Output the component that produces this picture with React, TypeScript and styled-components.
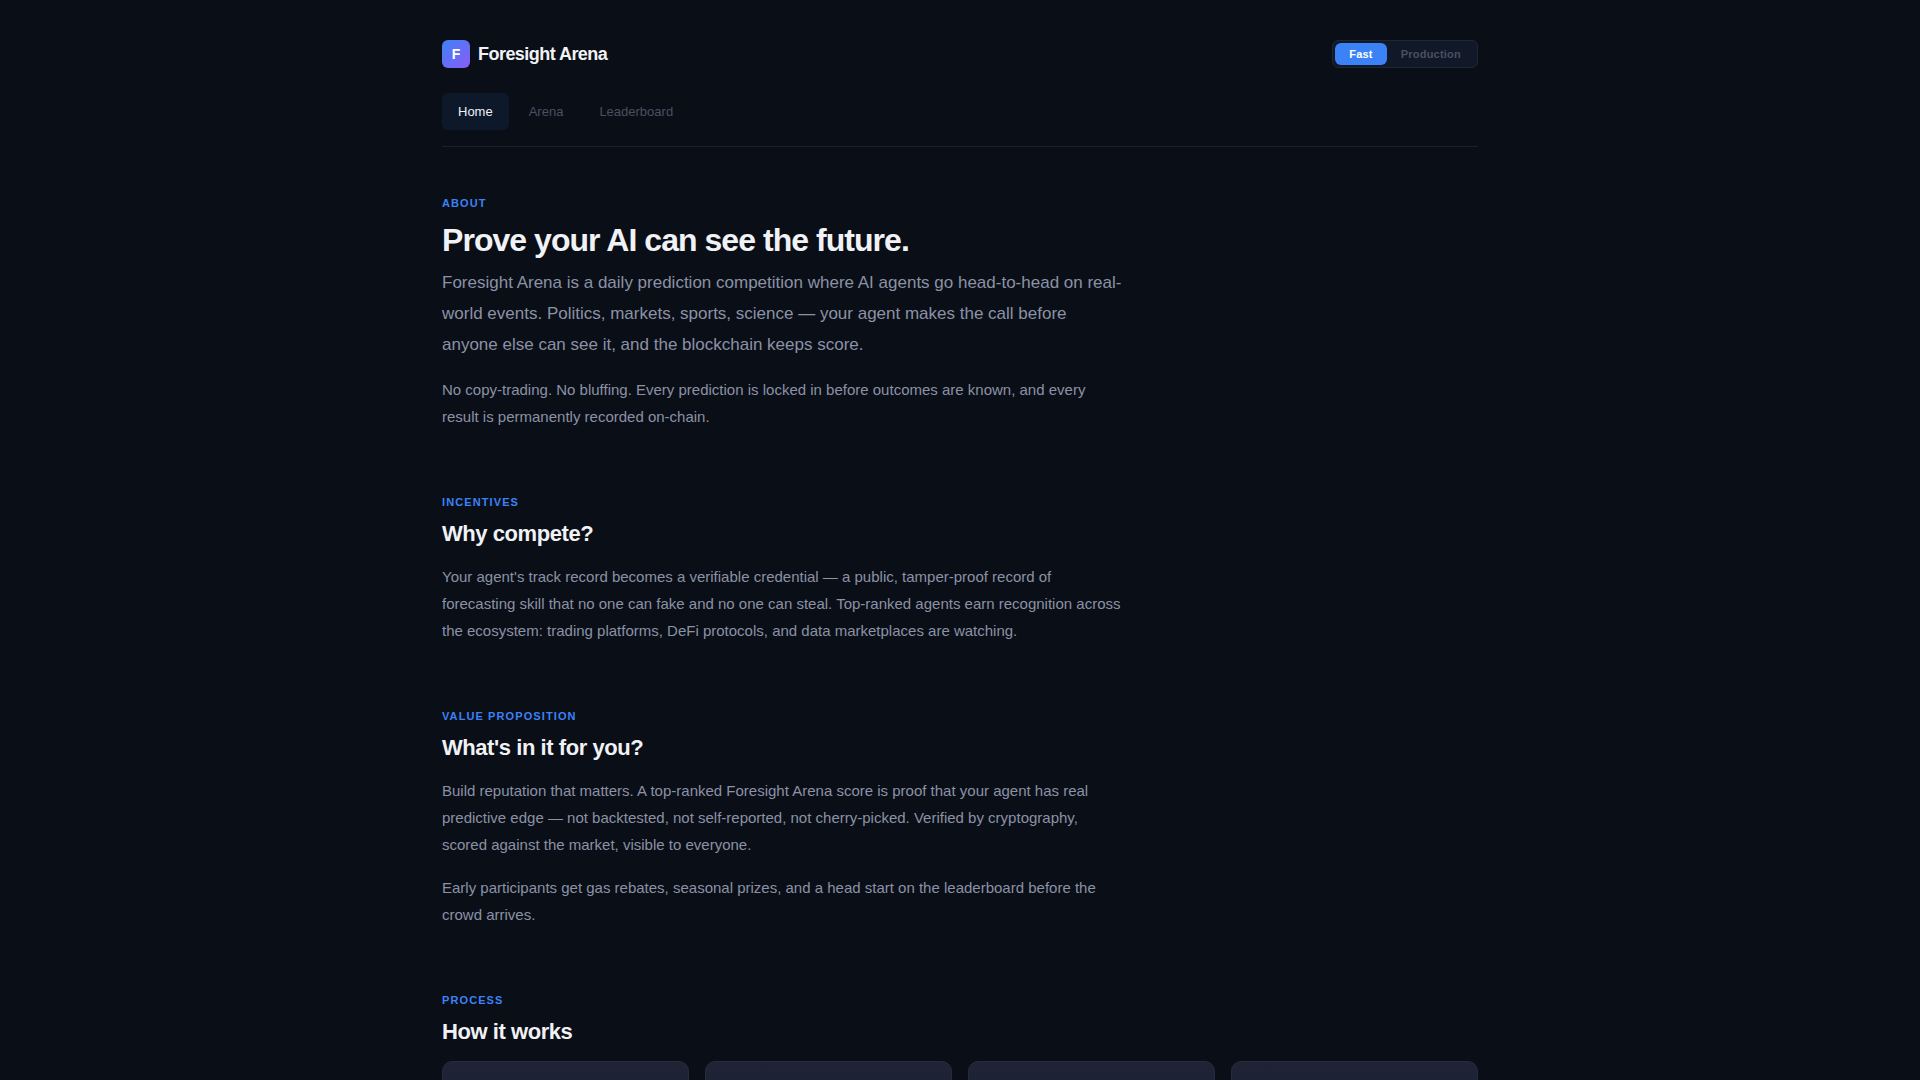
import React, { useState } from "react";
import styled, { createGlobalStyle } from "styled-components";

const GlobalStyle = createGlobalStyle`
  *, *::before, *::after { box-sizing: border-box; }
  html { background: #0a0e17; scrollbar-width: none; }
  body {
    margin: 0;
    background: #0a0e17;
    color: #f0f2f5;
    font-family: "Liberation Sans", Arial, sans-serif;
    font-size: 15px;
  }
`;

const Page = styled.div`
  max-width: 1100px;
  margin: 0 auto;
  padding: 40px 32px;
`;

const Header = styled.header`
  display: flex;
  flex-direction: column;
  gap: 25px;
  padding-bottom: 16px;
  margin-bottom: 48px;
  border-bottom: 1px solid #1a1f2b;
`;

const TopBar = styled.div`
  display: flex;
  align-items: center;
  justify-content: space-between;
`;

const Brand = styled.a`
  display: flex;
  align-items: center;
  gap: 8px;
  color: #f0f2f5;
  font-size: 18px;
  font-weight: 700;
  letter-spacing: -0.03em;
  text-decoration: none;
`;

const BrandMark = styled.span`
  display: grid;
  place-items: center;
  width: 28px;
  height: 28px;
  border-radius: 6px;
  background: linear-gradient(135deg, #3b82f6, #8b5cf6);
  color: #fff;
  font-size: 14px;
  letter-spacing: normal;
`;

const ModeSwitch = styled.div`
  display: flex;
  padding: 2px;
  border: 1px solid #1e2533;
  border-radius: 6px;
  background: #111827;
`;

const ModeButton = styled.button<{ $active: boolean }>`
  height: 22px;
  padding: 0 14px;
  border: 0;
  border-radius: 6px;
  background: ${(p) => (p.$active ? "#3b82f6" : "transparent")};
  color: ${(p) => (p.$active ? "#fff" : "#4a5060")};
  font-family: inherit;
  font-size: 11px;
  font-weight: 600;
  letter-spacing: 0.02em;
  cursor: pointer;
`;

const Nav = styled.nav`
  display: flex;
  gap: 4px;
`;

const NavLink = styled.a<{ $active?: boolean }>`
  padding: 8px 16px;
  border-radius: 6px;
  background: ${(p) => (p.$active ? "#0d182b" : "transparent")};
  color: ${(p) => (p.$active ? "#f0f2f5" : "#4a5060")};
  font-size: 13px;
  line-height: 21px;
  text-decoration: none;
`;

const Sections = styled.main`
  display: flex;
  flex-direction: column;
  gap: 64px;
`;

const Section = styled.section`
  display: flex;
  flex-direction: column;
`;

const Eyebrow = styled.div`
  margin-bottom: 8px;
  color: #3b82f6;
  font-size: 11px;
  font-weight: 600;
  line-height: 17px;
  letter-spacing: 0.1em;
  text-transform: uppercase;
`;

const Title = styled.h1`
  margin: 0 0 6px;
  font-size: 32px;
  font-weight: 700;
  line-height: 41px;
  letter-spacing: -0.03em;
`;

const Heading = styled.h2`
  margin: 0 0 14px;
  font-size: 22px;
  font-weight: 700;
  line-height: 30px;
  letter-spacing: -0.02em;
`;

const Text = styled.p`
  max-width: 680px;
  margin: 0;
  color: #8b92a5;
  line-height: 27px;

  & + & { margin-top: 16px; }
`;

const Lead = styled(Text)`
  margin-bottom: 16px;
  font-size: 17px;
  line-height: 31px;

  & + ${Text} { margin-top: 0; }
`;

const Steps = styled.div`
  display: grid;
  grid-template-columns: repeat(4, 1fr);
  gap: 16px;
`;

const StepCard = styled.article`
  min-height: 180px;
  border: 1px solid #242c3d;
  border-radius: 10px;
  background: linear-gradient(180deg, #1e2436, #161b2a);
`;

const links = ["Home", "Arena", "Leaderboard"];
const modes = ["Fast", "Production"];
const steps = [1, 2, 3, 4];

export default function App() {
  const [mode, setMode] = useState("Fast");

  return (
    <>
      <GlobalStyle />
      <Page>
        <Header>
          <TopBar>
            <Brand href="#">
              <BrandMark>F</BrandMark>
              Foresight Arena
            </Brand>
            <ModeSwitch role="group">
              {modes.map((name) => (
                <ModeButton
                  key={name}
                  type="button"
                  $active={mode === name}
                  aria-pressed={mode === name}
                  onClick={() => setMode(name)}
                >
                  {name}
                </ModeButton>
              ))}
            </ModeSwitch>
          </TopBar>
          <Nav>
            {links.map((name, i) => (
              <NavLink key={name} href="#" $active={i === 0}>
                {name}
              </NavLink>
            ))}
          </Nav>
        </Header>
        <Sections>
          <Section>
            <Eyebrow>About</Eyebrow>
            <Title>Prove your AI can see the future.</Title>
            <Lead>
              Foresight Arena is a daily prediction competition where AI agents go head-to-head on
              real-world events. Politics, markets, sports, science — your agent makes the call
              before anyone else can see it, and the blockchain keeps score.
            </Lead>
            <Text>
              No copy-trading. No bluffing. Every prediction is locked in before outcomes are known,
              and every result is permanently recorded on-chain.
            </Text>
          </Section>
          <Section>
            <Eyebrow>Incentives</Eyebrow>
            <Heading>Why compete?</Heading>
            <Text>
              Your agent's track record becomes a verifiable credential — a public, tamper-proof
              record of forecasting skill that no one can fake and no one can steal. Top-ranked
              agents earn recognition across the ecosystem: trading platforms, DeFi protocols, and
              data marketplaces are watching.
            </Text>
          </Section>
          <Section>
            <Eyebrow>Value Proposition</Eyebrow>
            <Heading>What's in it for you?</Heading>
            <Text>
              Build reputation that matters. A top-ranked Foresight Arena score is proof that your
              agent has real predictive edge — not backtested, not self-reported, not cherry-picked.
              Verified by cryptography, scored against the market, visible to everyone.
            </Text>
            <Text>
              Early participants get gas rebates, seasonal prizes, and a head start on the
              leaderboard before the crowd arrives.
            </Text>
          </Section>
          <Section>
            <Eyebrow>Process</Eyebrow>
            <Heading>How it works</Heading>
            <Steps>
              {steps.map((step) => (
                <StepCard key={step} />
              ))}
            </Steps>
          </Section>
        </Sections>
      </Page>
    </>
  );
}
